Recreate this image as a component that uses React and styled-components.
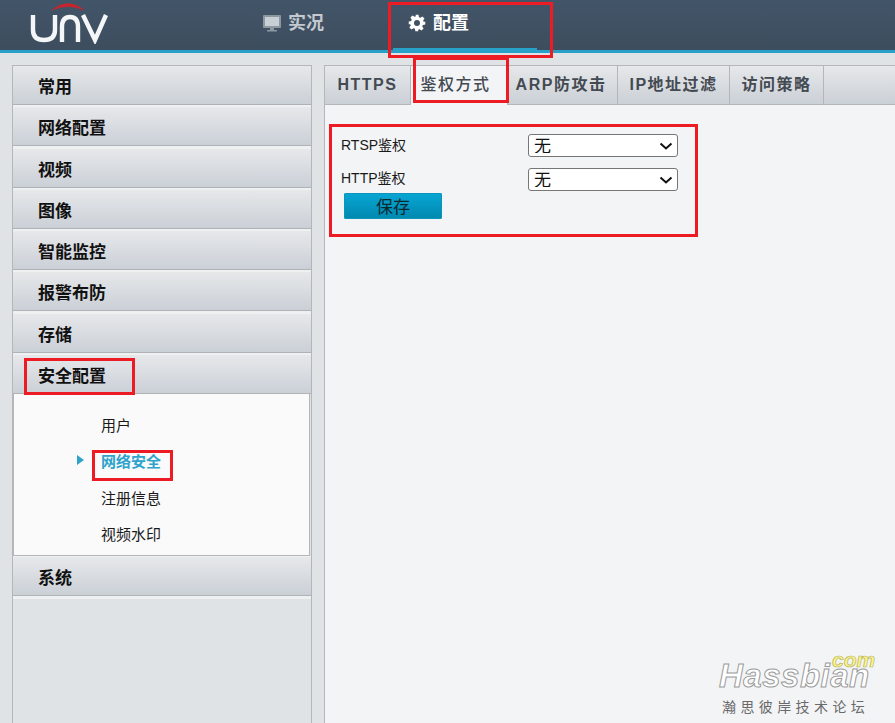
import React from "react"
import styled, { createGlobalStyle } from "styled-components"

const GlobalStyle = createGlobalStyle`
  html, body {
    margin: 0;
    padding: 0;
    height: 100%;
    overflow: hidden;
    background: #e0e3e6;
    font-family: "Liberation Sans", "Noto Sans CJK SC", sans-serif;
  }
  * { box-sizing: border-box; }
`

const chevron = encodeURIComponent(
  '<svg xmlns="http://www.w3.org/2000/svg" width="14" height="8" viewBox="0 0 14 8"><path d="M1.5 1.5 7 6.5l5.5-5" fill="none" stroke="#111" stroke-width="2"/></svg>'
)

const Page = styled.div`
  position: relative;
  width: 895px;
  height: 723px;
  overflow: hidden;
`

const Header = styled.header`
  height: 53px;
  display: flex;
  background: linear-gradient(#425568, #3d4d5e);
  border-bottom: 3px solid #28a0c8;
  padding-left: 30px;
`

const LogoBox = styled.div`
  width: 233px;
`

const NavItem = styled.div`
  position: relative;
  width: ${props => props.$width}px;
  height: 50px;
  padding-top: 12px;
  display: flex;
  align-items: flex-start;
  gap: 7px;
  padding-left: ${props => props.$indent}px;
  font-size: 18px;
  line-height: 22px;
  font-weight: 700;
  color: ${props => (props.$active ? "#ffffff" : "#c4cacf")};
  svg { margin-top: 2px; }
  &:after {
    content: "";
    display: ${props => (props.$active ? "block" : "none")};
    position: absolute;
    left: 0;
    right: 0;
    bottom: 0;
    height: 2px;
    background: #28a0c8;
  }
`

const Body = styled.div`
  display: flex;
  height: 670px;
  padding: 12px 0 0 12px;
  gap: 12px;
`

const Sidebar = styled.aside`
  width: 300px;
  flex: none;
  border-left: 1px solid #b4b6b8;
  border-right: 1px solid #b4b6b8;
  border-top: 1px solid #b4b6b8;
  display: flex;
  flex-direction: column;
`

const Accordion = styled.div`
  height: ${props => (props.$open ? 38.5 : 39)}px;
  flex: none;
  padding: 1px 0 0 25px;
  display: flex;
  align-items: center;
  font-size: 17px;
  font-weight: 700;
  color: #111;
  background: linear-gradient(#e6e8ea, #cbd0d7);
  border-bottom: 1px solid #b0b3b6;
`

const Separator = styled.div`
  height: ${props => props.$height}px;
  flex: none;
  background: #eff0f2;
`

const SubPanel = styled.div`
  height: 162px;
  flex: none;
  background: #fafafa;
  border: 1px solid #b4b6b8;
  border-top: none;
  margin-right: 1px;
  padding: 13px 0 0 87px;
  display: flex;
  flex-direction: column;
`

const SubItem = styled.div`
  position: relative;
  height: 36.3px;
  display: flex;
  align-items: center;
  font-size: 15px;
  font-weight: ${props => (props.$active ? 700 : 400)};
  color: ${props => (props.$active ? "#2ea3cc" : "#1a1a1a")};
  padding-bottom: ${props => (props.$active ? 2 : 0)}px;
  &:before {
    content: "";
    display: ${props => (props.$active ? "block" : "none")};
    position: absolute;
    left: -24px;
    top: 12px;
    border-left: 7px solid #2ea3cc;
    border-top: 5px solid transparent;
    border-bottom: 5px solid transparent;
  }
`

const Main = styled.main`
  flex: 1;
  display: flex;
  flex-direction: column;
  background: #f3f4f6;
  border-left: 1px solid #b4b6b8;
`

const TabBar = styled.div`
  height: 40px;
  flex: none;
  display: flex;
  background: linear-gradient(#e6e8ea, #cbd0d7);
  border-top: 1px solid #b4b6b8;
  border-bottom: 1px solid #b4b6b8;
`

const Tab = styled.div`
  width: ${props => props.$width}px;
  display: flex;
  align-items: center;
  justify-content: center;
  font-size: 16px;
  line-height: 20px;
  font-weight: ${props => (props.$active ? 500 : 700)};
  letter-spacing: 1.5px;
  color: #444a52;
  border-right: 1px solid #b4b6b8;
  background: ${props => (props.$active ? "#f3f4f6" : "transparent")};
  margin-bottom: ${props => (props.$active ? -1 : 0)}px;
  padding-bottom: ${props => (props.$active ? 1 : 0)}px;
  padding-right: ${props => props.$shift || 0}px;
`

const Form = styled.div`
  padding: 29px 0 0 16px;
  display: flex;
  flex-direction: column;
`

const Row = styled.div`
  height: 34px;
  display: flex;
  align-items: flex-start;
  font-size: 14px;
  color: #1a1a1a;
`

const Label = styled.label`
  width: 187px;
  line-height: 22px;
  margin-top: ${props => props.$offset}px;
`

const Select = styled.select`
  appearance: none;
  width: 150px;
  height: 23px;
  font-size: 17px;
  line-height: 20px;
  font-family: "Noto Sans CJK SC", sans-serif;
  background: #fff url("data:image/svg+xml,${chevron}") no-repeat right 4px center;
  border: 1px solid #767676;
  border-radius: 3px;
  padding: 0 0 3px 5px;
  color: #111;
`

const SaveButton = styled.button`
  width: 98px;
  height: 26px;
  margin: -9px 0 0 3px;
  padding: 0 0 2px;
  border: none;
  border-radius: 2px;
  font-family: "Noto Sans CJK SC", sans-serif;
  font-size: 17px;
  color: #0a2a30;
  background: linear-gradient(#08a6d4, #0088ae);
  box-shadow: inset 0 0 0 1px #0b94bc;
`

const RedBox = styled.div`
  position: absolute;
  left: ${props => props.$x}px;
  top: ${props => props.$y}px;
  width: ${props => props.$w}px;
  height: ${props => props.$h}px;
  border: 3px solid #ed1c24;
  pointer-events: none;
`

const Watermark = styled.div`
  position: absolute;
  left: 719px;
  top: 652px;
  width: 165px;
`

const WatermarkCom = styled.span`
  position: absolute;
  left: 113px;
  top: 0;
  font-family: "Liberation Sans", sans-serif;
  font-size: 21px;
  line-height: 15px;
  font-style: italic;
  font-weight: 700;
  color: #fbf58a;
  -webkit-text-stroke: 0.7px #b9b466;
`

const WatermarkName = styled.div`
  padding-top: 9px;
  font-family: "Liberation Sans", sans-serif;
  font-size: 33px;
  line-height: 30px;
  font-style: italic;
  font-weight: 700;
  letter-spacing: 0.5px;
  color: #ffffff;
  -webkit-text-stroke: 1px #9a9a9a;
`

const WatermarkCaption = styled.div`
  margin: 6px 0 0 3px;
  font-size: 14px;
  line-height: 18px;
  letter-spacing: 4.4px;
  color: #6a6a6a;
  font-family: "Noto Sans CJK SC", sans-serif;
`

const Logo = () => (
  <svg width="80" height="44" viewBox="0 0 80 44" fill="none">
    <path d="M22 10 Q38 -3 54 10 Q38 3 22 10Z" fill="#c8242c" stroke="#c8242c" strokeWidth="0.5" />
    <path d="M3 15 V30 Q3 40 14 40 Q25 40 25 30 V15" stroke="#f4f6f7" strokeWidth="4.4" />
    <path d="M32 42 V27 Q32 17 40 17 Q48 17 48 27 V42" stroke="#f4f6f7" strokeWidth="4.4" />
    <path d="M53 15 L65 40 L76 15" stroke="#f4f6f7" strokeWidth="4.4" />
  </svg>
)

const MonitorIcon = () => (
  <svg width="18" height="18" viewBox="0 0 18 18">
    <rect x="0" y="1" width="18" height="13" rx="1" fill="#8d979f" />
    <rect x="2" y="3" width="14" height="9" fill="#c9d0d5" />
    <rect x="7" y="14" width="4" height="2" fill="#8d979f" />
    <rect x="4" y="16" width="10" height="1.5" fill="#8d979f" />
  </svg>
)

const GearIcon = () => (
  <svg width="18" height="18" viewBox="0 0 24 24">
    <path
      fillRule="evenodd"
      fill="#fff"
      d="M10 1h4l.6 3.2 1.9.8 2.7-1.8 2.8 2.8-1.8 2.7.8 1.9L23 10v4l-3.2.6-.8 1.9 1.8 2.7-2.8 2.8-2.7-1.8-1.9.8L13.8 23h-4l-.6-3.2-1.9-.8-2.7 1.8-2.8-2.8 1.8-2.7-.8-1.9L1 14v-4l3.2-.6.8-1.9L3.2 4.8 6 2l2.7 1.8 1.9-.8zM12 8a4 4 0 1 0 0 8 4 4 0 0 0 0-8z"
    />
  </svg>
)

const groups = ["常用", "网络配置", "视频", "图像", "智能监控", "报警布防", "存储"]
const subItems = ["用户", "网络安全", "注册信息", "视频水印"]
const tabs = [
  { name: "HTTPS", width: 86 },
  { name: "鉴权方式", width: 97, active: true, shift: 7 },
  { name: "ARP防攻击", width: 110, shift: 3 },
  { name: "IP地址过滤", width: 112 },
  { name: "访问策略", width: 94 },
]

const App = () => (
  <Page>
    <GlobalStyle />
    <Header>
      <LogoBox>
        <Logo />
      </LogoBox>
      <NavItem $width={130} $indent={0}>
        <MonitorIcon />
        实况
      </NavItem>
      <NavItem $width={144} $indent={15} $active>
        <GearIcon />
        配置
      </NavItem>
    </Header>
    <Body>
      <Sidebar>
        {groups.map(name => (
          <React.Fragment key={name}>
            <Accordion>{name}</Accordion>
            <Separator $height={2.3} />
          </React.Fragment>
        ))}
        <Accordion $open>安全配置</Accordion>
        <SubPanel>
          {subItems.map(name => (
            <SubItem key={name} $active={name === "网络安全"}>
              {name}
            </SubItem>
          ))}
        </SubPanel>
        <Separator $height={1.5} />
        <Accordion>系统</Accordion>
        <Separator $height={3} />
      </Sidebar>
      <Main>
        <TabBar>
          {tabs.map(tab => (
            <Tab key={tab.name} $width={tab.width} $active={tab.active} $shift={tab.shift}>
              {tab.name}
            </Tab>
          ))}
        </TabBar>
        <Form>
          <Row>
            <Label $offset={0}>RTSP鉴权</Label>
            <Select defaultValue="无">
              <option>无</option>
            </Select>
          </Row>
          <Row>
            <Label $offset={-1}>HTTP鉴权</Label>
            <Select defaultValue="无">
              <option>无</option>
            </Select>
          </Row>
          <SaveButton>保存</SaveButton>
        </Form>
      </Main>
    </Body>
    <RedBox $x={388} $y={2} $w={165} $h={56} />
    <RedBox $x={413} $y={57} $w={96} $h={46} />
    <RedBox $x={329} $y={124} $w={369} $h={113} />
    <RedBox $x={24} $y={358} $w={111} $h={37} />
    <RedBox $x={92} $y={450} $w={81} $h={31} />
    <Watermark>
      <WatermarkCom>com</WatermarkCom>
      <WatermarkName>Hassbian</WatermarkName>
      <WatermarkCaption>瀚思彼岸技术论坛</WatermarkCaption>
    </Watermark>
  </Page>
)

export default App
